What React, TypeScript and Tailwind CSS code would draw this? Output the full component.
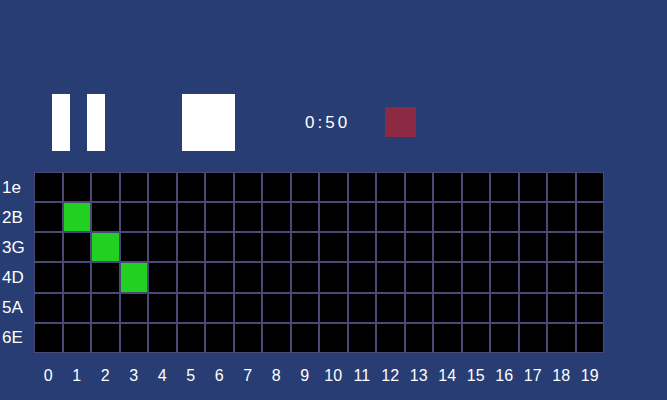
import React from "react";

const rowLabels = ["1e", "2B", "3G", "4D", "5A", "6E"];
const active: Record<number, number> = { 1: 1, 2: 2, 3: 3 };

export default function App() {
  return (
    <div
      className="w-[667px] h-[400px] bg-[#283d73] text-white overflow-hidden"
      style={{ fontFamily: '"Liberation Sans", Arial, sans-serif' }}
    >
      <div className="pt-[94px] flex items-start">
        <div className="ml-[52px] w-[18px] h-[57px] bg-white" />
        <div className="ml-[17px] w-[18px] h-[57px] bg-white" />
        <div className="ml-[77px] w-[53px] h-[57px] bg-white" />
        <div className="ml-[70px] w-[50px] h-[57px] flex items-center text-[17px] tracking-[3px] whitespace-nowrap">0:50</div>
        <div className="ml-[30px] mt-[13px] w-[31px] h-[30px] bg-[#8c2a44]" />
      </div>
      <div className="mt-[21px] flex">
        <div className="w-[34px] flex flex-col pt-[1px] gap-[2px]">
          {rowLabels.map((l) => (
            <div key={l} className="h-[28.17px] flex items-center pl-[2px] text-[17px] leading-none">
              {l}
            </div>
          ))}
        </div>
        <div className="w-[570px] h-[181px] bg-[#4a4877] p-[1px] grid grid-cols-[repeat(20,1fr)] grid-rows-[repeat(6,1fr)] gap-[2px]">
          {rowLabels.map((_, r) =>
            Array.from({ length: 20 }, (_, c) => (
              <div key={`${r}-${c}`} className={active[r] === c ? "bg-[#22d022]" : "bg-black"} />
            ))
          )}
        </div>
      </div>
      <div className="ml-[34px] w-[570px] mt-[15px] grid grid-cols-[repeat(20,1fr)] text-[16px] leading-none">
        {Array.from({ length: 20 }, (_, i) => (
          <div key={i} className="text-center">
            {i}
          </div>
        ))}
      </div>
    </div>
  );
}
